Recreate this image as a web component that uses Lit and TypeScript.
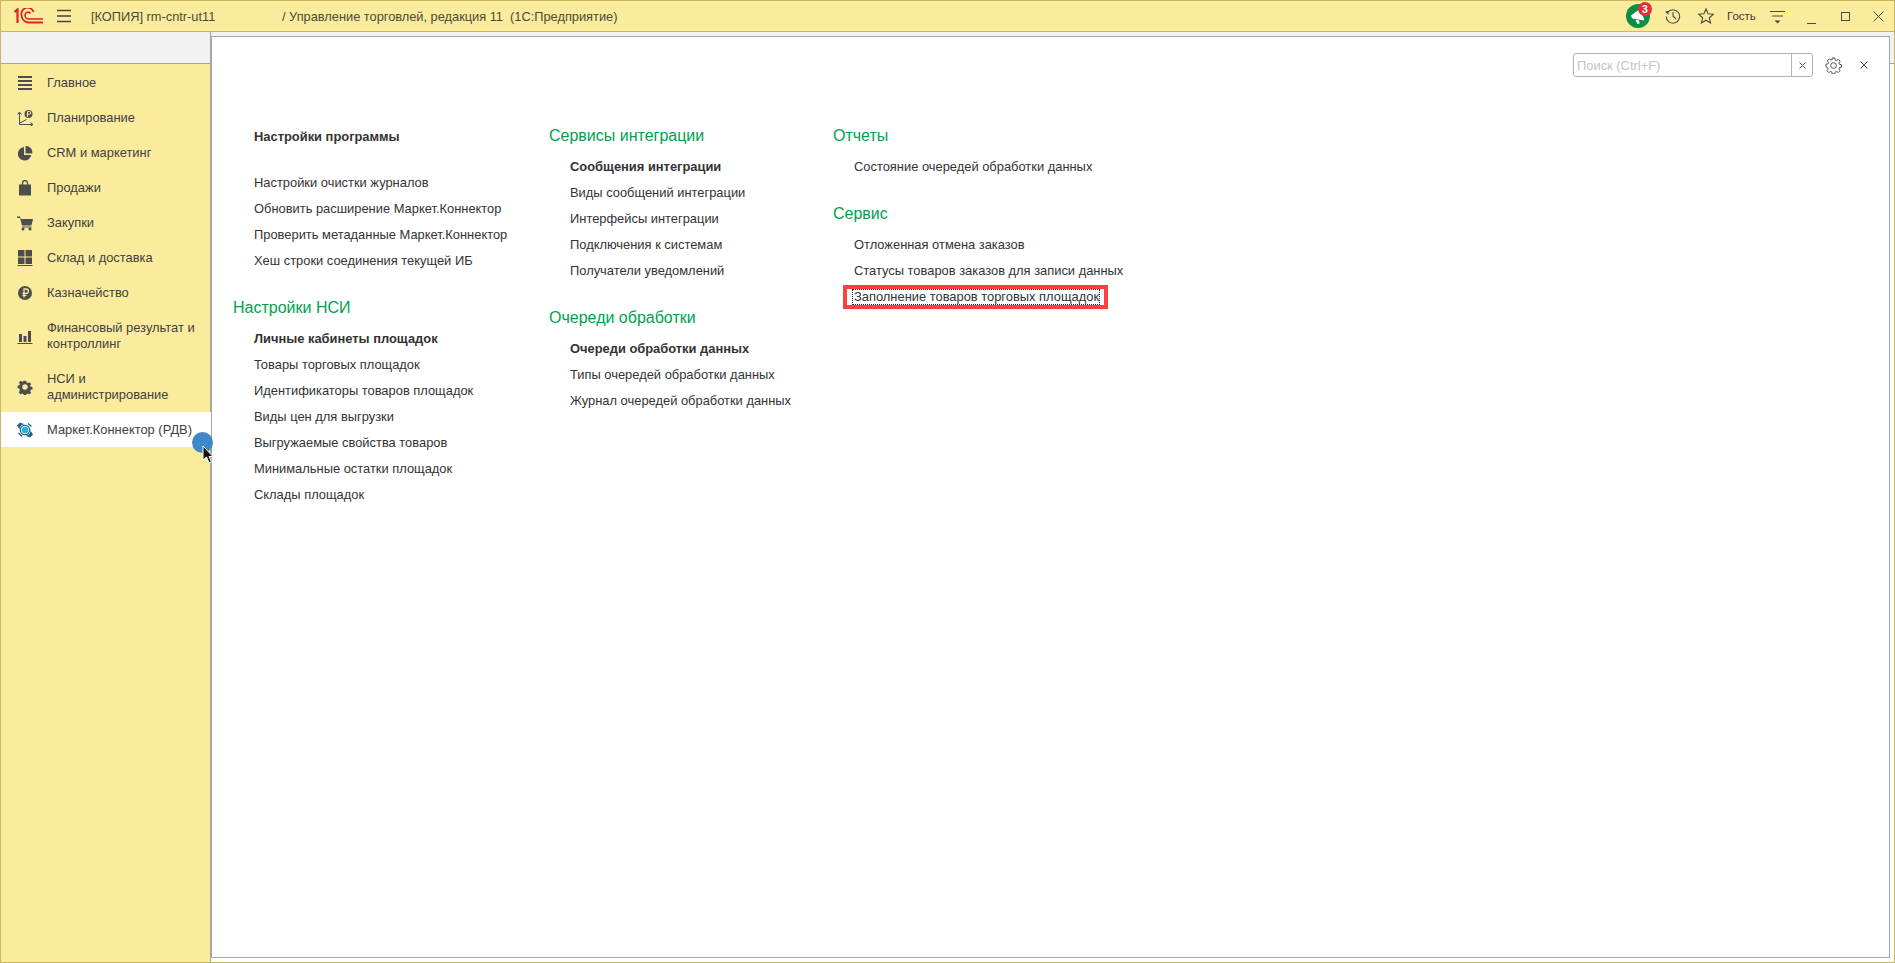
import { LitElement, html, css, svg } from "lit";
import { customElement } from "lit/decorators.js";

const navIcons: Record<string, unknown> = {
  main: svg`<path d="M1 1h14v2H1zM1 5h14v2H1zM1 9h14v2H1zM1 13h14v2H1z" fill="#4d4d4d"/>`,
  plan: svg`<g fill="none" stroke="#4d4d4d" stroke-width="1"><path d="M2.500 2.500v12h13"/><path d="M.5 4.500L2.500 2 4.500 4.500M13.500 12.500l2.500 2-2.500 1.500"/><path d="M3 13L9.500 9.500"/></g><circle cx="11.500" cy="4" r="4" fill="#4d4d4d"/><path d="M10.500 7V1.500h1.800a1.200 1.200 0 010 2.800H9.500" stroke="#fbec9d" fill="none" stroke-width="1"/>`,
  crm: svg`<path d="M7 2a6.800 6.800 0 107.300 8H7z" fill="#4d4d4d"/><path d="M8.500 1a6.500 6.500 0 016.800 7.500H8.500z" fill="#4d4d4d"/>`,
  sales: svg`<path d="M2 4.500h12v11H2z" fill="#4d4d4d"/><path d="M5.500 6V3a2.500 2.500 0 015 0v3" fill="none" stroke="#4d4d4d" stroke-width="1.300"/>`,
  buy: svg`<path d="M0 1.500h3l.8 2.500H16l-1.600 6.500H5L3 3H0z" fill="#4d4d4d"/><path d="M5 11.500h9.500v1H5z" fill="#4d4d4d"/><circle cx="6" cy="14" r="1.500" fill="#4d4d4d"/><circle cx="13" cy="14" r="1.500" fill="#4d4d4d"/>`,
  stock: svg`<path d="M1 0h6.500v6.500H1zM8.500 0H15v6.500H8.500zM1 7.500h6.500V14H1zM8.500 7.500H15V14H8.500zM.5 15h15v1H.5z" fill="#4d4d4d"/>`,
  money: svg`<circle cx="8" cy="8" r="7" fill="#4d4d4d"/><path d="M7 12.500V4h2.200a2 2 0 010 4.300H5.500M5.500 10.300H9.500" stroke="#fbec9d" fill="none" stroke-width="1.300"/>`,
  fin: svg`<path d="M2 6h3v8H2zM6.500 8h3v6h-3zM11 3h3v11h-3zM.5 15h15v1H.5z" fill="#4d4d4d"/>`,
  gear: svg`<path d="M6.600 1h2.800l.4 2 1.300.6 1.800-1.100 2 2-1.100 1.800.6 1.300 2 .4v2.800l-2 .4-.6 1.300 1.100 1.800-2 2-1.800-1.100-1.300.6-.4 2H6.600l-.4-2-1.300-.6-1.800 1.100-2-2L2.200 11l-.6-1.300-2-.4V6.500l2-.4.600-1.300L1.100 3l2-2 1.800 1.100 1.300-.6z" transform="translate(.9 .9) scale(.89)" fill="#4d4d4d"/><circle cx="8" cy="8" r="2.700" fill="#fbec9d"/>`,
  market: svg`<path d="M0 3.500L3 .5 7.500 2.300a6 6 0 00-5.200 5zM16 12.500L13 15.500 8.500 13.700a6 6 0 005.200-5z" fill="#1d5f85"/><path d="M11 1.500l3.500 3M1.500 11l3.500 3.500" stroke="#1d5f85" stroke-width="1.300"/><circle cx="8" cy="8" r="4.700" fill="none" stroke="#1d5f85" stroke-width="1.200"/><circle cx="8" cy="8" r="3.300" fill="#22b5e0"/>`,
};

const nav = [
  { icon: "main", label: "Главное" },
  { icon: "plan", label: "Планирование" },
  { icon: "crm", label: "CRM и маркетинг" },
  { icon: "sales", label: "Продажи" },
  { icon: "buy", label: "Закупки" },
  { icon: "stock", label: "Склад и доставка" },
  { icon: "money", label: "Казначейство" },
  { icon: "fin", label: "Финансовый результат и контроллинг" },
  { icon: "gear", label: "НСИ и администрирование" },
  { icon: "market", label: "Маркет.Коннектор (РДВ)", active: true },
];

@customElement("app-root")
export class AppRoot extends LitElement {
  static styles = css`
    :host { display: block; width: 1895px; height: 963px; font-family: "Liberation Sans", Arial, sans-serif; font-size: 12.900px; color: #333; overflow: hidden; }
    * { box-sizing: border-box; }
    .app { position: relative; height: 963px; display: flex; flex-direction: column; border: 1px solid #c9b860; }
    .head { height: 31px; flex: none; background: #fbec9d; border-bottom: 1px solid #c9b860; display: flex; align-items: center; color: #4a4a3a; font-size: 12.800px; }
    .logo { margin-left: 13px; width: 29px; height: 16px; flex: none; }
    .burger { margin-left: 14px; width: 14px; height: 14px; flex: none; }
    .base { margin-left: 20px; width: 191px; flex: none; }
    .title { flex: 1; white-space: pre; }
    .tools { display: flex; align-items: center; }
    .note { position: relative; width: 24px; height: 24px; margin-right: 15px; }
    .badge { position: absolute; left: 12px; top: -2px; width: 14px; height: 14px; border-radius: 50%; background: #e62e3a; color: #fff; font-size: 10.500px; font-weight: 700; display: flex; align-items: center; justify-content: center; }
    .ti { flex: none; display: block; }
    .t-hist { margin-right: 17px; }
    .t-filter { margin-right: 22px; margin-top: 2px; }
    .t-min { margin-right: 25px; margin-top: 7px; }
    .t-max { margin-right: 23px; }
    .t-close { margin-right: 10px; }
    .guest { font-size: 11.500px; color: #4a3040; margin: 0 15px 0 13px; width: 28px; white-space: nowrap; }
    .body { flex: 1; min-height: 0; display: grid; grid-template-columns: 210px 1fr; }
    .side { display: flex; flex-direction: column; background: #fbec9d; border-right: 1px solid #a6a6a6; }
    .strip { height: 32px; flex: none; background: #f2f2f2; border-bottom: 1px solid #a6a6a6; }
    .nav { display: flex; flex-direction: column; padding-top: 1px; }
    .item { display: grid; grid-template-columns: 46px 1fr; align-items: center; padding: 9.500px 8px 9.500px 0; line-height: 16px; color: #404040; margin-right: -1px; }
    .item.active { background: #fff; }
    .item svg { width: 16px; height: 16px; justify-self: center; margin-left: 2px; }
    .main { background: linear-gradient(#f2f2f2 0 31px, #a6a6a6 31px 32px, #fff 32px); padding: 4px 4px 4px 1px; min-width: 0; display: flex; }
    .panel { flex: 1; background: #fff; border: 1px solid #a6a6a6; position: relative; display: flex; flex-direction: column; margin-left: -1px; }
    .search { position: absolute; top: 16px; right: 76px; width: 240px; height: 24px; border: 1px solid #b3b3b3; border-radius: 3px; display: flex; align-items: center; background: #fff; color: #c4c4c4; padding-left: 3px; }
    .search .q { flex: 1; }
    .search .x { width: 21px; height: 22px; border-left: 1px solid #b3b3b3; display: flex; align-items: center; justify-content: center; }
    .gear { position: absolute; top: 20px; right: 47px; }
    .close { position: absolute; top: 24px; right: 21px; }
    .cols { display: grid; grid-template-columns: 316px 284px 1fr; padding: 86px 0 0 21px; }
    .col { display: flex; flex-direction: column; }
    .col.first { padding-top: 1px; }
    h2 { margin: 0 0 5px; font-weight: 400; font-size: 16px; line-height: 26px; color: #00a04f; }
    .sec { display: flex; flex-direction: column; margin-bottom: 21px; }
    .sec.tight { margin-bottom: 20px; }
    .lnk { height: 26px; line-height: 26px; padding-left: 21px; white-space: nowrap; color: #333; }
    .bold { font-weight: 700; }
    .mark { margin: 1px 0 1px 10px; width: fit-content; height: 24px; border: 4px solid #ff4040; padding: 0 4px 0 5px; display: flex; align-items: center; }
    .mark span { border: 1px dotted #222; padding: 0 0 0 1px; height: 16px; line-height: 14px; white-space: nowrap; }
    .spot { position: absolute; left: 191px; top: 431px; width: 21px; height: 21px; border-radius: 50%; background: #3f87c9; }
    .cursor { position: absolute; left: 201px; top: 444px; width: 12px; height: 19px; }
  `;

  link(t: string, bold = false) {
    return html`<div class="lnk ${bold ? "bold" : ""}">${t}</div>`;
  }

  render() {
    return html`<div class="app">
      <header class="head">
        <svg class="logo" viewBox="0 0 29 16" fill="none" stroke="#d8232a">
          <path d="M0.500 4L3.500 1.500V15" stroke-width="2.200"/>
          <path d="M19.500 4A6.200 6.200 0 0 0 7.500 7c0 4.500 3.500 7.500 7 7.500H29" stroke-width="1.800"/>
          <path d="M16.500 5.500a3 3 0 0 0-5.500 1.500c0 2 1.500 4 3.500 4H29" stroke-width="1.600"/>
        </svg>
        <svg class="burger" viewBox="0 0 14 14" stroke="#404040" stroke-width="1.300"><path d="M0 1.500h14M0 7h14M0 12.500h14"/></svg>
        <div class="base">[КОПИЯ] rm-cntr-ut11</div>
        <div class="title">/ Управление торговлей, редакция 11  (1С:Предприятие)</div>
        <div class="tools">
          <div class="note">
            <svg width="24" height="24" viewBox="0 0 24 24"><circle cx="12" cy="12" r="12" fill="#0c8f42"/><path d="M5 11.500L14.500 4.500 18.500 16.500 6 14.500z" fill="#fff"/><path d="M9.500 15.800l3.300.5 1 3-2.400.6z" fill="#fff"/></svg>
            <div class="badge">3</div>
          </div>
          <svg class="ti t-hist" width="16" height="16" viewBox="0 0 16 16" fill="none" stroke="#4a4a4a" stroke-width="1.100"><path d="M2.500 4.500A6.700 6.700 0 1 1 1.200 8.500"/><path d="M0 3.500l3.500-.5v4z" fill="#4a4a4a" stroke="none"/><path d="M8 4v4.300l3 2.400"/></svg>
          <svg class="ti" width="16" height="16" viewBox="0 0 17 17" fill="none" stroke="#4a4a4a" stroke-width="1.200"><path d="M8.500 1l2.200 5.200 5.600.5-4.300 3.700 1.300 5.500-4.800-2.900-4.800 2.900 1.300-5.500L.7 6.700l5.600-.5z"/></svg>
          <div class="guest">Гость</div>
          <svg class="ti t-filter" width="15" height="15" viewBox="0 0 15 15" stroke="#4a4a4a"><path d="M0 1.500h15M2 6h11"/><path d="M4.500 10.500h6l-3 3z" fill="#4a4a4a" stroke="none"/></svg>
          <svg class="ti t-min" width="9" height="9" viewBox="0 0 9 9" stroke="#4a4a4a"><path d="M0 8.500h9"/></svg>
          <svg class="ti t-max" width="9" height="9" viewBox="0 0 9 9" fill="none" stroke="#4a4a4a"><rect x=".5" y=".5" width="8" height="8"/></svg>
          <svg class="ti t-close" width="11" height="11" viewBox="0 0 11 11" stroke="#4a4a4a"><path d="M.5.500l10 10M10.500.500l-10 10"/></svg>
        </div>
      </header>
      <div class="body">
        <aside class="side">
          <div class="strip"></div>
          <nav class="nav">
            ${nav.map(
              (n) => html`<div class="item ${n.active ? "active" : ""}">
                <svg viewBox="0 0 16 16">${navIcons[n.icon]}</svg>
                <span>${n.label}</span>
              </div>`
            )}
          </nav>
        </aside>
        <main class="main">
          <section class="panel">
            <div class="search">
              <span class="q">Поиск (Ctrl+F)</span>
              <span class="x"><svg width="7" height="7" viewBox="0 0 7 7" stroke="#555"><path d="M.5.500l6 6M6.500.500l-6 6"/></svg></span>
            </div>
            <svg class="gear" width="17" height="17" viewBox="-1 -1 18 18" fill="none" stroke="#4a4a4a"><path d="M6.600 0h2.800l.4 2.200 1.300.6 1.900-1.300 2 2-1.300 1.900.6 1.300 2.200.4v2.800l-2.200.4-.6 1.300 1.300 1.900-2 2-1.900-1.300-1.300.6-.4 2.200H6.600l-.4-2.200-1.300-.6-1.900 1.300-2-2 1.300-1.900-.6-1.300L0 9.400V6.600l2.200-.4.600-1.300L1.500 3l2-2 1.900 1.300 1.300-.6z"/><circle cx="8" cy="8" r="3"/></svg>
            <svg class="close" width="8" height="8" viewBox="0 0 8 8" stroke="#555"><path d="M.5.500l7 7M7.500.500l-7 7"/></svg>
            <div class="cols">
              <div class="col first">
                <div class="sec tight">${this.link("Настройки программы", true)}</div>
                <div class="sec">
                  ${this.link("Настройки очистки журналов")}
                  ${this.link("Обновить расширение Маркет.Коннектор")}
                  ${this.link("Проверить метаданные Маркет.Коннектор")}
                  ${this.link("Хеш строки соединения текущей ИБ")}
                </div>
                <div class="sec">
                  <h2>Настройки НСИ</h2>
                  ${this.link("Личные кабинеты площадок", true)}
                  ${this.link("Товары торговых площадок")}
                  ${this.link("Идентификаторы товаров площадок")}
                  ${this.link("Виды цен для выгрузки")}
                  ${this.link("Выгружаемые свойства товаров")}
                  ${this.link("Минимальные остатки площадок")}
                  ${this.link("Склады площадок")}
                </div>
              </div>
              <div class="col">
                <div class="sec">
                  <h2>Сервисы интеграции</h2>
                  ${this.link("Сообщения интеграции", true)}
                  ${this.link("Виды сообщений интеграции")}
                  ${this.link("Интерфейсы интеграции")}
                  ${this.link("Подключения к системам")}
                  ${this.link("Получатели уведомлений")}
                </div>
                <div class="sec">
                  <h2>Очереди обработки</h2>
                  ${this.link("Очереди обработки данных", true)}
                  ${this.link("Типы очередей обработки данных")}
                  ${this.link("Журнал очередей обработки данных")}
                </div>
              </div>
              <div class="col">
                <div class="sec">
                  <h2>Отчеты</h2>
                  ${this.link("Состояние очередей обработки данных")}
                </div>
                <div class="sec">
                  <h2>Сервис</h2>
                  ${this.link("Отложенная отмена заказов")}
                  ${this.link("Статусы товаров заказов для записи данных")}
                  <div class="mark"><span>Заполнение товаров торговых площадок</span></div>
                </div>
              </div>
            </div>
          </section>
        </main>
      </div>
      <div class="spot"></div>
      <svg class="cursor" viewBox="0 0 12 19"><path d="M1 1v14l3.500-3 2.500 6 2.500-1-2.500-5.500H11z" fill="#111" stroke="#fff" stroke-width="1"/></svg>
    </div>`;
  }
}
